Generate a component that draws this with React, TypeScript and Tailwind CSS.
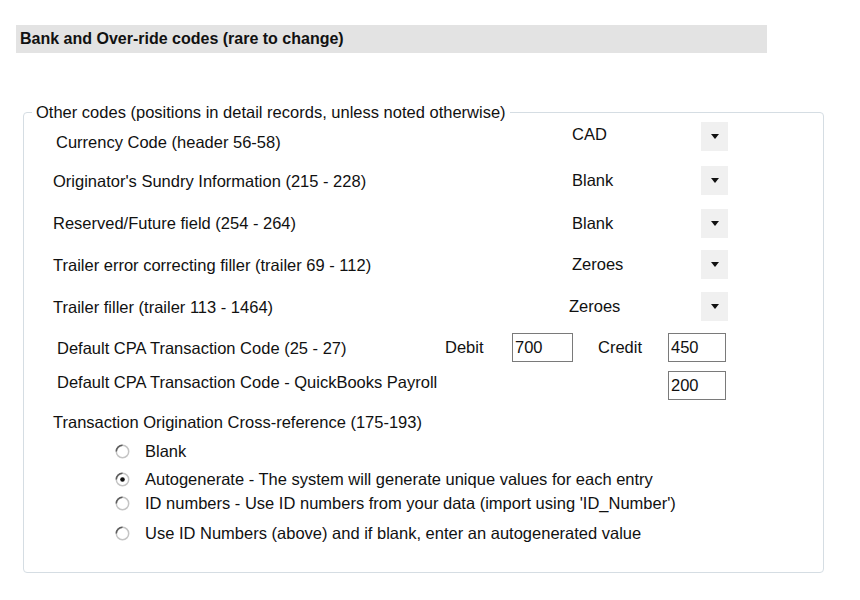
import React from "react";

const font = { fontFamily: '"Liberation Sans", Arial, sans-serif' };

function DropBtn() {
  return (
    <div className="w-[27px] h-[29px] bg-[#f0f0f0] flex items-center justify-center shrink-0">
      <svg width="8" height="5" viewBox="0 0 8 5">
        <path d="M0 0 H8 L4 5 Z" fill="#111" />
      </svg>
    </div>
  );
}

function Radio({ checked }: { checked?: boolean }) {
  return (
    <svg width="15" height="15" viewBox="0 0 15 15" className="shrink-0">
      <circle cx="7.5" cy="7.5" r="6.2" fill="#fff" stroke="#c4c4c4" strokeWidth="1.5" />
      <path d="M1.3 7.5 A6.2 6.2 0 0 1 7.5 1.3" fill="none" stroke="#5e5e5e" strokeWidth="1.5" />
      {checked && <circle cx="7.5" cy="7.5" r="2.3" fill="#111" />}
    </svg>
  );
}

type DropRow = { label: string; value: string; pl: string; mt: string; lpt: string; vpl: string };

const drops: DropRow[] = [
  { label: "Currency Code (header 56-58)", value: "CAD", pl: "pl-[32px]", mt: "mt-[9px]", lpt: "pt-[12px]", vpl: "pl-0" },
  { label: "Originator's Sundry Information (215 - 228)", value: "Blank", pl: "pl-[29px]", mt: "mt-[15px]", lpt: "pt-[2px]", vpl: "pl-0" },
  { label: "Reserved/Future field (254 - 264)", value: "Blank", pl: "pl-[29px]", mt: "mt-[14px]", lpt: "pt-0", vpl: "pl-0" },
  { label: "Trailer error correcting filler (trailer 69 - 112)", value: "Zeroes", pl: "pl-[29px]", mt: "mt-[12px]", lpt: "pt-[2px]", vpl: "pl-0" },
  { label: "Trailer filler (trailer 113 - 1464)", value: "Zeroes", pl: "pl-[29px]", mt: "mt-[13px]", lpt: "pt-[2px]", vpl: "-ml-[3px]" },
];

export default function App() {
  return (
    <div className="w-[860px] h-[600px] bg-white text-[#111] overflow-hidden" style={font}>
      <div className="pt-[25px] pl-[16px]">
        <div className="w-[751px] h-[28px] bg-[#e3e3e3] flex items-center pl-[4px] text-[16px] font-bold tracking-[0px]">
          Bank and Over-ride codes (rare to change)
        </div>
      </div>

      <div className="ml-[23px] mt-[59px] w-[801px] h-[461px] border border-[#d5dde3] rounded-[4px] relative text-[16.5px]">
        <div className="absolute left-[8px] top-[-11px] bg-white px-[4px] leading-[20px]">
          Other codes (positions in detail records, unless noted otherwise)
        </div>

        {drops.map((d, i) => (
          <div key={i} className={`flex items-center h-[29px] ${d.mt}`}>
            <div className={`w-[548px] ${d.pl} ${d.lpt}`}>{d.label}</div>
            <div className="w-[129px]">
              <span className={`${i === 0 ? "relative -top-[2px]" : ""} inline-block ${d.vpl}`}>{d.value}</span>
            </div>
            <DropBtn />
          </div>
        ))}

        <div className="flex items-center h-[29px] mt-[12px]">
          <div className="w-[421px] pl-[33px] pt-[2px]">Default CPA Transaction Code (25 - 27)</div>
          <div className="w-[67px]">Debit</div>
          <div className="w-[61px] h-[29px] border border-[#7a7a7a] pl-[2px] leading-[26px]">700</div>
          <div className="w-[25px]" />
          <div className="w-[70px]">Credit</div>
          <div className="w-[58px] h-[29px] border border-[#7a7a7a] pl-[2px] leading-[26px]">450</div>
        </div>

        <div className="flex items-center h-[29px] mt-[9px]">
          <div className="w-[644px] pl-[33px] pb-[6px]">Default CPA Transaction Code - QuickBooks Payroll</div>
          <div className="w-[58px] h-[29px] border border-[#7a7a7a] pl-[2px] leading-[26px]">200</div>
        </div>

        <div className="h-[20px] mt-[12px] pl-[29px] leading-[20px]">Transaction Origination Cross-reference (175-193)</div>

        <div className="flex flex-col pl-[91px]">
          {[
            { t: "Blank", mt: "mt-[7px]", c: false },
            { t: "Autogenerate - The system will generate unique values for each entry", mt: "mt-[4px]", c: true },
            { t: "ID numbers - Use ID numbers from your data (import using 'ID_Number')", mt: "mt-0", c: false },
            { t: "Use ID Numbers (above) and if blank, enter an autogenerated value", mt: "mt-[6px]", c: false },
          ].map((r, i) => (
            <div key={i} className={`flex items-center h-[24px] gap-[15px] ${r.mt}`}>
              <Radio checked={r.c} />
              <span>{r.t}</span>
            </div>
          ))}
        </div>
      </div>
    </div>
  );
}
